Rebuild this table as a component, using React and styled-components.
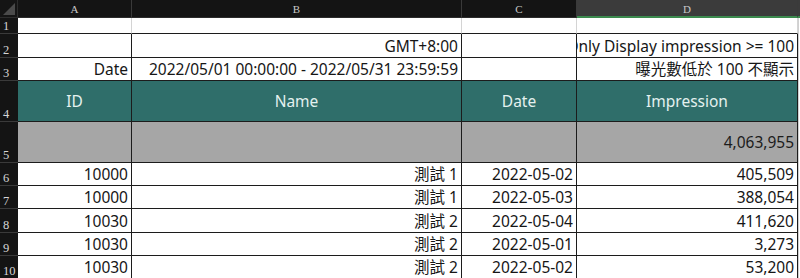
import React from "react";
import styled, { createGlobalStyle, css } from "styled-components";

const Global = createGlobalStyle`
  html, body { margin: 0; padding: 0; background: #ffffff; }
  body { overflow: hidden; }
`;

const Sheet = styled.div`
  display: grid;
  grid-template-columns: 18px 114px 330px 115px 221px 2px;
  grid-template-rows: 18px 16px 24px 23px 41px 41px 23px 23px 24px 23px 23px;
  width: 800px;
  height: 278px;
  overflow: hidden;
  font-family: "Noto Sans", "Noto Sans CJK TC", sans-serif;
  font-size: 15.5px;
  color: #161616;
`;

const Corner = styled.div`
  background: #141414;
  border-right: 1px solid #2c2c2c;
  border-bottom: 1px solid #2c2c2c;
  box-sizing: border-box;
  position: relative;
  &::after {
    content: "";
    position: absolute;
    right: 2px;
    bottom: 2px;
    width: 0;
    height: 0;
    border-left: 12px solid transparent;
    border-bottom: 12px solid #4a4a4a;
  }
`;

const ColHead = styled.div`
  box-sizing: border-box;
  background: ${(p) => (p.$selected ? "#3b3b3b" : "#141414")};
  border-right: 1px solid #3a3a3a;
  border-bottom: ${(p) => (p.$selected ? "2px solid #3c8a4e" : "1px solid #2c2c2c")};
  color: #c8c8c8;
  font-family: "Liberation Serif", "DejaVu Serif", serif;
  font-size: 11px;
  display: flex;
  align-items: center;
  justify-content: center;
  padding-top: 1px;
`;

const RowHead = styled.div`
  box-sizing: border-box;
  background: #141414;
  border-bottom: 1px solid #3a3a3a;
  color: #d6d6d6;
  font-family: "Liberation Serif", "DejaVu Serif", serif;
  font-size: 12.5px;
  display: flex;
  align-items: flex-end;
  padding: 0 0 0 3px;
  line-height: 14px;
`;

const tones = {
  plain: css`
    background: #ffffff;
    color: #161616;
  `,
  head: css`
    background: #2f6e6a;
    color: #e4f1ef;
  `,
  total: css`
    background: #a6a6a6;
    color: #1c1c1c;
  `,
};

const Cell = styled.div`
  box-sizing: border-box;
  ${(p) => tones[p.$tone || "plain"]};
  border-right: 1px solid ${(p) => (p.$light ? "#d4d4d4" : "#1c1c1c")};
  border-bottom: 1px solid #1c1c1c;
  display: flex;
  align-items: center;
  justify-content: ${(p) =>
    p.$align === "center" ? "center" : p.$align === "left" ? "flex-start" : "flex-end"};
  padding: ${(p) => (p.$align === "center" ? "0" : "0 3px")};
  white-space: nowrap;
  overflow: hidden;
  line-height: 18px;
`;

const Edge = styled.div`
  background: #ffffff;
  border-left: 1px solid #d0d0d0;
  box-sizing: border-box;
`;

const EdgeHead = styled.div`
  background: #3b3b3b;
  border-bottom: 2px solid #3c8a4e;
  box-sizing: border-box;
`;

const rows = [
  ["10000", "測試 1", "2022-05-02", "405,509"],
  ["10000", "測試 1", "2022-05-03", "388,054"],
  ["10030", "測試 2", "2022-05-04", "411,620"],
  ["10030", "測試 2", "2022-05-01", "3,273"],
  ["10030", "測試 2", "2022-05-02", "53,200"],
];

export default function App() {
  return (
    <>
      <Global />
      <Sheet>
        <Corner />
        <ColHead>A</ColHead>
        <ColHead>B</ColHead>
        <ColHead>C</ColHead>
        <ColHead $selected>D</ColHead>
        <EdgeHead />

        <RowHead>1</RowHead>
        <Cell $light />
        <Cell $light />
        <Cell $light />
        <Cell $light />
        <Edge />

        <RowHead>2</RowHead>
        <Cell />
        <Cell>GMT+8:00</Cell>
        <Cell />
        <Cell>Only Display impression &gt;= 100</Cell>
        <Edge />

        <RowHead>3</RowHead>
        <Cell>Date</Cell>
        <Cell>2022/05/01 00:00:00 - 2022/05/31 23:59:59</Cell>
        <Cell />
        <Cell>曝光數低於 100 不顯示</Cell>
        <Edge />

        <RowHead>4</RowHead>
        <Cell $tone="head" $align="center">ID</Cell>
        <Cell $tone="head" $align="center">Name</Cell>
        <Cell $tone="head" $align="center">Date</Cell>
        <Cell $tone="head" $align="center">Impression</Cell>
        <Edge />

        <RowHead>5</RowHead>
        <Cell $tone="total" />
        <Cell $tone="total" />
        <Cell $tone="total" />
        <Cell $tone="total">4,063,955</Cell>
        <Edge />

        {rows.map((r, i) => (
          <React.Fragment key={i}>
            <RowHead>{i + 6}</RowHead>
            <Cell>{r[0]}</Cell>
            <Cell>{r[1]}</Cell>
            <Cell>{r[2]}</Cell>
            <Cell>{r[3]}</Cell>
            <Edge />
          </React.Fragment>
        ))}
      </Sheet>
    </>
  );
}
